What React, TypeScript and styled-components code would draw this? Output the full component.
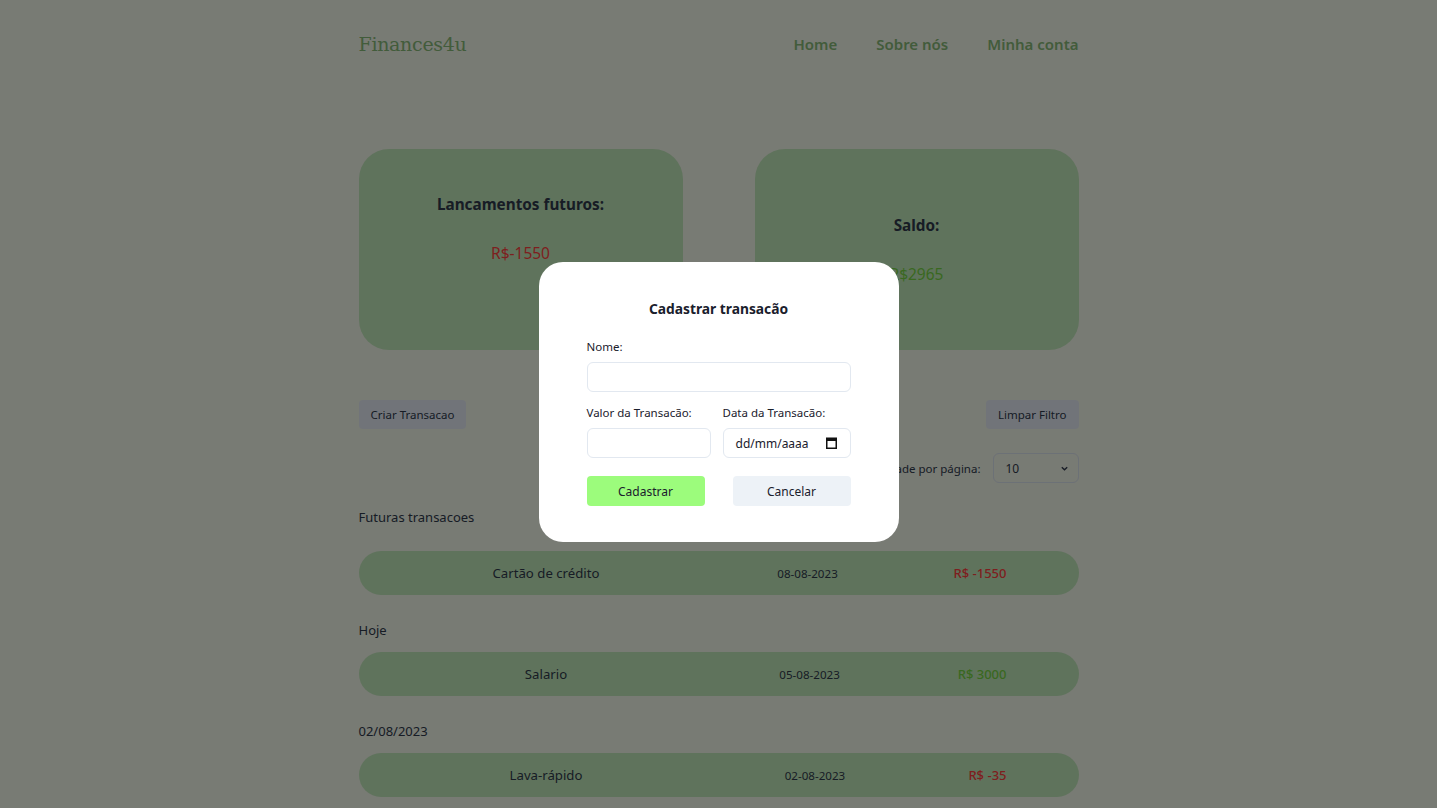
import React from 'react';
import styled, { createGlobalStyle } from 'styled-components';

const Color = {
  Page: '#e7ebdf',
  Card: '#b7ddb1',
  Brand: '#7fb072',
  Text: '#2d3748',
  Dark: '#1a202c',
  Red: '#f03c3c',
  Green: '#6fc83f',
  Button: '#d8dfe8',
  Border: '#e2e8f0',
};

const GlobalStyle = createGlobalStyle`
  body {
    margin: 0;
    background: ${Color.Page};
    font-family: 'Noto Sans', 'Open Sans', sans-serif;
    color: ${Color.Text};
  }
  * { box-sizing: border-box; }
`;

const Page = styled.div`
  width: 720px;
  margin: 0 auto;
  padding-bottom: 40px;
`;

const Header = styled.header`
  height: 88px;
  display: flex;
  align-items: center;
  justify-content: space-between;
`;

const Brand = styled.div`
  font-family: 'DejaVu Serif', 'Liberation Serif', serif;
  font-size: 19px;
  letter-spacing: -0.3px;
  color: ${Color.Brand};
`;

const Nav = styled.nav`
  display: flex;
  gap: 39px;
`;

const NavLink = styled.a`
  font-size: 15px;
  font-weight: 600;
  color: ${Color.Brand};
  text-decoration: none;
`;

const Cards = styled.div`
  margin-top: 61px;
  display: grid;
  grid-template-columns: 1fr 1fr;
  gap: 72px;
`;

const Card = styled.div<{ $offset?: number }>`
  height: 201px;
  border-radius: 30px;
  background: ${Color.Card};
  display: flex;
  flex-direction: column;
  align-items: center;
  justify-content: center;
  padding-bottom: ${(p) => p.$offset ?? 0}px;
`;

const CardTitle = styled.h2`
  margin: 0;
  font-size: 15.3px;
  font-weight: 700;
  color: ${Color.Text};
`;

const CardValue = styled.div<{ $negative?: boolean }>`
  margin-top: 28px;
  font-size: 15.5px;
  color: ${(p) => (p.$negative ? Color.Red : Color.Green)};
`;

const Toolbar = styled.div`
  margin-top: 50px;
  display: flex;
  justify-content: space-between;
`;

const GrayButton = styled.button`
  height: 29px;
  padding: 0 12px;
  border: none;
  border-radius: 4px;
  background: ${Color.Button};
  font-family: inherit;
  font-size: 11.5px;
  color: ${Color.Text};
`;

const PageSizeRow = styled.div`
  margin-top: 24px;
  display: flex;
  justify-content: flex-end;
  align-items: center;
  gap: 12px;
  font-size: 11.5px;
`;

const Select = styled.div`
  width: 86px;
  height: 30px;
  border: 1px solid #cfd8e2;
  border-radius: 6px;
  display: flex;
  align-items: center;
  justify-content: space-between;
  padding: 0 9px 0 12px;
  font-size: 12px;
`;

const SectionTitle = styled.div<{ $gap: number }>`
  margin-top: 25px;
  margin-bottom: ${(p) => p.$gap}px;
  font-size: 13px;
  line-height: 20px;
  color: ${Color.Text};
`;

const Row = styled.div`
  height: 44px;
  border-radius: 22px;
  background: ${Color.Card};
  display: flex;
  align-items: center;
  justify-content: space-between;
  padding: 0 72px;
`;

const RowName = styled.div`
  width: 231px;
  text-align: center;
  font-size: 13.2px;
  color: ${Color.Text};
`;

const RowDate = styled.div`
  font-size: 11.6px;
  color: ${Color.Text};
`;

const RowAmount = styled.div<{ $negative?: boolean }>`
  font-size: 13px;
  font-weight: 500;
  color: ${(p) => (p.$negative ? Color.Red : Color.Green)};
`;

const Overlay = styled.div`
  position: fixed;
  inset: 0;
  background: rgba(0, 0, 0, 0.48);
  display: flex;
  align-items: center;
  justify-content: center;
`;

const Modal = styled.div`
  width: 360px;
  height: 280px;
  margin-top: -4px;
  background: #ffffff;
  border-radius: 24px;
  padding: 37px 48px 0;
  color: ${Color.Dark};
`;

const ModalTitle = styled.h3`
  margin: 0 0 20px;
  text-align: center;
  font-size: 13.8px;
  line-height: 20px;
  font-weight: 700;
`;

const Label = styled.label`
  display: block;
  font-size: 11.5px;
  line-height: 16px;
  margin-bottom: 7px;
`;

const Input = styled.input`
  display: block;
  width: 100%;
  height: 30px;
  border: 1px solid ${Color.Border};
  border-radius: 6px;
  padding: 0 12px;
  font-family: inherit;
  font-size: 12px;
  outline: none;
`;

const DateBox = styled.div`
  height: 30px;
  border: 1px solid ${Color.Border};
  border-radius: 6px;
  display: flex;
  align-items: center;
  justify-content: space-between;
  padding: 0 13px 0 12px;
  font-size: 12px;
  color: ${Color.Dark};
`;

const FieldRow = styled.div`
  margin-top: 13px;
  display: grid;
  grid-template-columns: 124px 1fr;
  gap: 12px;
`;

const Actions = styled.div`
  margin-top: 18px;
  display: flex;
  justify-content: space-between;
`;

const ActionButton = styled.button<{ $primary?: boolean }>`
  width: 118px;
  height: 30px;
  border: none;
  border-radius: 4px;
  background: ${(p) => (p.$primary ? '#9cfc7c' : '#edf2f7')};
  font-family: inherit;
  font-size: 12px;
  color: ${Color.Dark};
`;

const CalendarIcon = () => (
  <svg width="11" height="12" viewBox="0 0 11 12">
    <rect x="0.75" y="1.25" width="9.5" height="10" fill="none" stroke="#111" strokeWidth="1.5" />
    <rect x="0" y="1" width="11" height="3" fill="#111" />
  </svg>
);

const Chevron = () => (
  <svg width="9" height="9" viewBox="0 0 10 10">
    <path d="M2 3.5 L5 6.5 L8 3.5" fill="none" stroke={Color.Text} strokeWidth="1.5" />
  </svg>
);

const sections = [
  { title: 'Futuras transacoes', gap: 24, rows: [{ name: 'Cartão de crédito', date: '08-08-2023', amount: -1550 }] },
  { title: 'Hoje', gap: 12, rows: [{ name: 'Salario', date: '05-08-2023', amount: 3000 }] },
  { title: '02/08/2023', gap: 12, rows: [{ name: 'Lava-rápido', date: '02-08-2023', amount: -35 }] },
];

export default function App() {
  return (
    <>
      <GlobalStyle />
      <Page>
        <Header>
          <Brand>Finances4u</Brand>
          <Nav>
            <NavLink href="#">Home</NavLink>
            <NavLink href="#">Sobre nós</NavLink>
            <NavLink href="#">Minha conta</NavLink>
          </Nav>
        </Header>

        <Cards>
          <Card $offset={42}>
            <CardTitle>Lancamentos futuros:</CardTitle>
            <CardValue $negative>R$-1550</CardValue>
          </Card>
          <Card>
            <CardTitle>Saldo:</CardTitle>
            <CardValue>R$2965</CardValue>
          </Card>
        </Cards>

        <Toolbar>
          <GrayButton>Criar Transacao</GrayButton>
          <GrayButton>Limpar Filtro</GrayButton>
        </Toolbar>

        <PageSizeRow>
          <span>Quantidade por página:</span>
          <Select>
            <span>10</span>
            <Chevron />
          </Select>
        </PageSizeRow>

        {sections.map((s, i) => (
          <div key={s.title} style={i === 0 ? { marginTop: -1 } : undefined}>
            <SectionTitle $gap={s.gap}>{s.title}</SectionTitle>
            {s.rows.map((r) => (
              <Row key={r.name}>
                <RowName>{r.name}</RowName>
                <RowDate>{r.date}</RowDate>
                <RowAmount $negative={r.amount < 0}>R$ {r.amount}</RowAmount>
              </Row>
            ))}
          </div>
        ))}
      </Page>

      <Overlay>
        <Modal>
          <ModalTitle>Cadastrar transacão</ModalTitle>
          <Label>Nome:</Label>
          <Input />
          <FieldRow>
            <div>
              <Label>Valor da Transacão:</Label>
              <Input />
            </div>
            <div>
              <Label>Data da Transacão:</Label>
              <DateBox>
                <span>dd/mm/aaaa</span>
                <CalendarIcon />
              </DateBox>
            </div>
          </FieldRow>
          <Actions>
            <ActionButton $primary>Cadastrar</ActionButton>
            <ActionButton>Cancelar</ActionButton>
          </Actions>
        </Modal>
      </Overlay>
    </>
  );
}
